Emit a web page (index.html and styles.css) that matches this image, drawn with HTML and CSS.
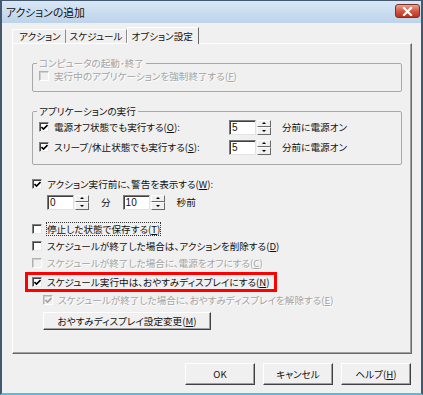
FILE: index.html
```html
<!DOCTYPE html>
<html lang="ja">
<head>
    <meta charset="UTF-8">
    <meta name="viewport" content="width=device-width, initial-scale=1.0">
    <title>アクションの追加</title>
    <link rel="stylesheet" href="styles.css">
</head>
<body>
    <div class="window">
        <div class="titlebar">
            <span class="title">アクションの追加</span>
            <span class="close">
                <svg width="11" height="9" viewBox="0 0 11 9">
                    <path d="M2 1 L9 8 M9 1 L2 8" stroke="#fff" stroke-width="2.2" stroke-linecap="square"/>
                </svg>
            </span>
        </div>
        <div class="client">
            <div class="tabs">
                <div class="tab">アクション</div>
                <div class="tab">スケジュール</div>
                <div class="tab active">オプション設定</div>
            </div>

            <div class="panel">
                <!-- Computer start / shutdown -->
                <fieldset class="group disabled">
                    <legend>コンピュータの起動･終了</legend>
                    <div class="row row-first">
                        <span class="cb"></span>
                        <span>実行中のアプリケーションを強制終了する(<u>F</u>)</span>
                    </div>
                </fieldset>

                <!-- Application run -->
                <fieldset class="group group-app">
                    <legend>アプリケーションの実行</legend>
                    <div class="row row-spin">
                        <span class="check"><span class="cb checked"></span>電源オフ状態でも実行する(<u>O</u>):</span>
                        <span class="field">5</span>
                        <span class="spin"><span><i class="up"></i></span><span><i class="down"></i></span></span>
                        <span class="unit">分前に電源オン</span>
                    </div>
                    <div class="row row-spin">
                        <span class="check"><span class="cb checked"></span>スリープ/休止状態でも実行する(<u>S</u>):</span>
                        <span class="field">5</span>
                        <span class="spin"><span><i class="up"></i></span><span><i class="down"></i></span></span>
                        <span class="unit">分前に電源オン</span>
                    </div>
                </fieldset>

                <div class="row row-warn">
                    <span class="cb checked"></span>
                    <span>アクション実行前に、警告を表示する(<u>W</u>):</span>
                </div>
                <div class="row row-time">
                    <span class="field">0</span>
                    <span class="spin"><span><i class="up"></i></span><span><i class="down"></i></span></span>
                    <span class="time-unit">分</span>
                    <span class="field">10</span>
                    <span class="spin"><span><i class="up"></i></span><span><i class="down"></i></span></span>
                    <span class="time-unit">秒前</span>
                </div>

                <div class="row row-opt row-save">
                    <span class="cb"></span>
                    <span class="focus">停止した状態で保存する(<u>T</u>)</span>
                </div>
                <div class="row row-opt">
                    <span class="cb"></span>
                    <span>スケジュールが終了した場合は、アクションを削除する(<u>D</u>)</span>
                </div>
                <div class="row row-opt disabled">
                    <span class="cb"></span>
                    <span>スケジュールが終了した場合に、電源をオフにする(<u>C</u>)</span>
                </div>

                <div class="highlight">
                    <span class="cb checked"></span>
                    <span>スケジュール実行中は、おやすみディスプレイにする(<u>N</u>)</span>
                </div>
                <div class="row row-sub disabled">
                    <span class="cb checked"></span>
                    <span>スケジュールが終了した場合に、おやすみディスプレイを解除する(<u>E</u>)</span>
                </div>
                <button class="btn btn-display">おやすみディスプレイ設定変更(<u>M</u>)</button>
            </div>

            <div class="buttons">
                <button class="btn btn-dialog">OK</button>
                <button class="btn btn-dialog">キャンセル</button>
                <button class="btn btn-dialog">ヘルプ(<u>H</u>)</button>
            </div>
        </div>
    </div>
</body>
</html>
```

FILE: styles.css
```css
body {
    margin: 0;
    font-family: "Noto Sans CJK JP", "Noto Sans", sans-serif;
    font-size: 9.6px;
    font-feature-settings: "palt";
    line-height: 12px;
    color: #111;
}

.window {
    box-sizing: border-box;
    width: 423px;
    height: 395px;
    display: flex;
    flex-direction: column;
    background-color: #f0f0f0;
    border: solid #44596d;
    border-width: 1px 2px 0 2px;
    border-bottom: 2px solid #5cb8dc;
}

/* Title bar */
.titlebar {
    height: 22px;
    display: flex;
    align-items: center;
    justify-content: space-between;
    padding: 0 1px 0 4px;
    background: linear-gradient(#d8e7f6, #bdd3ea);
}

.title {
    font-size: 10.8px;
}

.close {
    align-self: flex-start;
    margin-top: 3px;
    width: 23px;
    height: 12px;
    display: flex;
    align-items: center;
    justify-content: center;
    border: 1px solid #7d3027;
    border-radius: 3px;
    background: linear-gradient(#e9a493, #d05a45 50%, #b8321f);
}

/* Client area */
.client {
    flex: 1;
    padding: 4px 9px 0 10px;
}

.tabs {
    display: flex;
    align-items: flex-end;
    height: 16px;
}

.tab {
    box-sizing: border-box;
    height: 14px;
    padding: 0 4px;
    line-height: 13px;
    border-top: 1px solid #fff;
    border-right: 1px solid #8c8c8c;
}

.tab:first-child {
    padding-left: 6px;
    border-left: 1px solid #fff;
}

.tab.active {
    position: relative;
    z-index: 1;
    height: 17px;
    margin-bottom: -1px;
    padding: 0 5px 0 3px;
    line-height: 16px;
    background-color: #f0f0f0;
    border-left: 1px solid #fff;
    border-right: 1px solid #696969;
}

.panel {
    box-sizing: border-box;
    height: 311px;
    padding: 13px 9px 0 19px;
    border: 1px solid;
    border-color: #fff #696969 #696969 #fff;
    box-shadow: inset -1px -1px 0 #a0a0a0;
}

/* Group boxes */
.group {
    margin: 0;
    padding: 0 6px 8px 6px;
    border: 1px solid #a8a8a8;
    border-radius: 2px;
}

.group legend {
    padding: 0 2px;
    margin-left: -2px;
    line-height: 12px;
}

.group-app {
    margin-top: 13px;
    padding-bottom: 7px;
}

.row {
    display: flex;
    align-items: center;
}

.row-first {
    height: 14px;
}

.row-spin {
    height: 20px;
}

.check {
    display: flex;
    align-items: center;
    width: 190px;
}

.unit {
    margin-left: 11px;
}

.row-warn {
    margin-top: 10px;
    height: 18px;
}

.row-time {
    height: 18px;
    padding-left: 15px;
}

.time-unit {
    margin: 0 12px;
}

.row-save {
    margin-top: 9px;
}

.row-opt {
    height: 17px;
}

.focus {
    outline: 1px dotted #333;
    outline-offset: 0;
}

.highlight {
    display: flex;
    align-items: center;
    width: fit-content;
    height: 14px;
    margin: 1px 0 0 -7px;
    padding: 0 5px 0 4px;
    border: 3px solid #f00;
}

.row-sub {
    height: 16px;
    padding-left: 11px;
}

/* Checkboxes */
.cb {
    flex: none;
    box-sizing: border-box;
    width: 10px;
    height: 10px;
    margin-right: 5px;
    border: 1px solid;
    border-color: #808080 #e8e8e8 #e8e8e8 #808080;
    box-shadow: inset 1px 1px 0 #404040;
    background-color: #fff;
    background-repeat: no-repeat;
    background-position: 1px 1px;
}

.cb.checked {
    background-image: url("data:image/svg+xml,%3Csvg xmlns='http://www.w3.org/2000/svg' width='7' height='7' viewBox='0 0 7 7'%3E%3Cpath d='M0.5 3 L2.5 5 L6.5 1' fill='none' stroke='%23000' stroke-width='1.6'/%3E%3C/svg%3E");
}

.disabled {
    color: #a3a3a3;
    text-shadow: 1px 1px 0 #fff;
}

.disabled .cb {
    background-color: #f0f0f0;
    border-color: #b0b0b0 #fff #fff #b0b0b0;
    box-shadow: inset 1px 1px 0 #d0d0d0;
}

.disabled .cb.checked {
    background-image: url("data:image/svg+xml,%3Csvg xmlns='http://www.w3.org/2000/svg' width='7' height='7' viewBox='0 0 7 7'%3E%3Cpath d='M0.5 3 L2.5 5 L6.5 1' fill='none' stroke='%23a0a0a0' stroke-width='1.6'/%3E%3C/svg%3E");
}

/* Spin fields */
.field {
    box-sizing: border-box;
    width: 27px;
    height: 15px;
    padding-left: 2px;
    line-height: 13px;
    font-family: "Liberation Sans", sans-serif;
    font-size: 10px;
    background-color: #fff;
    border: 1px solid;
    border-color: #7a7a7a #e3e3e3 #e3e3e3 #7a7a7a;
    box-shadow: inset 1px 1px 0 #404040;
}

.spin {
    display: flex;
    flex-direction: column;
    width: 14px;
    height: 15px;
    margin-left: 1px;
}

.spin span {
    flex: 1;
    display: flex;
    align-items: center;
    justify-content: center;
    border: 1px solid;
    border-color: #fff #696969 #696969 #fff;
    background-color: #f0f0f0;
}

.spin i {
    width: 0;
    height: 0;
    border-left: 2px solid transparent;
    border-right: 2px solid transparent;
}

.spin i.up {
    border-bottom: 2px solid #000;
}

.spin i.down {
    border-top: 2px solid #000;
}

/* Buttons */
.btn {
    box-sizing: border-box;
    padding: 0;
    font: inherit;
    font-feature-settings: "palt";
    color: #111;
    background-color: #f0f0f0;
    border: 1px solid;
    border-color: #fff #404040 #404040 #fff;
    box-shadow: inset -1px -1px 0 #a0a0a0;
}

.btn-display {
    display: block;
    width: 168px;
    height: 18px;
    margin: 4px 0 0 11px;
}

.buttons {
    display: flex;
    justify-content: flex-end;
    gap: 8px;
    margin: 9px 1px 0 0;
}

.btn-dialog {
    width: 70px;
    height: 22px;
}
```
